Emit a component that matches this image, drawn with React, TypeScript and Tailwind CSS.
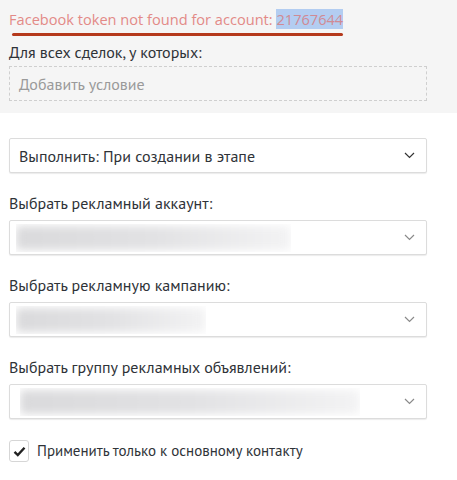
import React from 'react';

function Chevron({ light }: { light?: boolean }) {
  return (
    <svg width="11" height="7" viewBox="0 0 11 7" className="shrink-0">
      <path d="M1 1 L5.5 5.5 L10 1" fill="none" stroke={light ? '#8a8a8a' : '#333'} strokeWidth="1.2" />
    </svg>
  );
}

interface SelectProps {
  text?: string;
  blurWidth?: number;
  blurLeft?: number;
}

function Select({ text, blurWidth = 0, blurLeft = 6 }: SelectProps) {
  return (
    <div className="relative flex h-[35px] w-[418px] items-center justify-between rounded-[2px] border border-[#dcdcdc] bg-white pl-[9px] pr-[11px] shadow-[0_1px_1px_rgba(0,0,0,0.08)]">
      {text ? (
        <span className="text-[16px] text-[#2f3338]">{text}</span>
      ) : (
        <div className="h-[28px] overflow-hidden" style={{ marginLeft: blurLeft - 9 }}>
          <div
            className="h-[24px] mt-[2px] rounded-[4px] bg-gradient-to-r from-[#dadadc] via-[#e2e2e4] to-[#f3f3f4] blur-[4px]"
            style={{ width: blurWidth }}
          />
        </div>
      )}
      <Chevron light={!text} />
    </div>
  );
}

export default function App() {
  return (
    <div className="w-[457px] h-[480px] bg-white font-['PT_Sans','Open_Sans',sans-serif] overflow-hidden">
      <div className="bg-[#f5f5f5] h-[113px] px-[9px] pt-[7px]">
        <div className="inline-block relative font-['Open_Sans',sans-serif] text-[14.6px] text-[#e38a87] leading-[22px]">
          Facebook token not found for account:{' '}
          <span className="bg-[#b3cdf1] text-[#d08a94]">21767644</span>
          <div className="absolute left-[3px] right-0 top-[25px] h-[3px] rounded-full bg-[#b5391c]" />
        </div>
        <div className="mt-[10px] text-[16px] leading-[22px] text-[#2f3338]">Для всех сделок, у которых:</div>
        <div className="mt-[3px] flex h-[35px] w-[418px] items-center border border-dashed border-[#cfcfcf] px-[9px] text-[16px] text-[#9a9a9a]">
          Добавить условие
        </div>
      </div>
      <div className="px-[9px]">
        <div className="mt-[25px]">
          <Select text="Выполнить: При создании в этапе" />
        </div>
        <div className="mt-[19px] text-[16px] leading-[22px] text-[#2f3338]">Выбрать рекламный аккаунт:</div>
        <div className="mt-[6px]">
          <Select blurWidth={275} blurLeft={6} />
        </div>
        <div className="mt-[19px] text-[16px] leading-[22px] text-[#2f3338]">Выбрать рекламную кампанию:</div>
        <div className="mt-[6px]">
          <Select blurWidth={190} blurLeft={6} />
        </div>
        <div className="mt-[19px] text-[16px] leading-[22px] text-[#2f3338]">Выбрать группу рекламных объявлений:</div>
        <div className="mt-[6px]">
          <Select blurWidth={340} blurLeft={10} />
        </div>
        <div className="mt-[21px] flex items-center gap-[8px]">
          <div className="flex h-[22px] w-[20px] items-center justify-center rounded-[3px] border border-[#d6d6d6] bg-white">
            <svg width="13" height="11" viewBox="0 0 13 11">
              <path d="M1.5 5.8 L4.8 9 L11.5 1.8" fill="none" stroke="#222" strokeWidth="2.4" />
            </svg>
          </div>
          <span className="text-[15px] text-[#2f3338]">Применить только к основному контакту</span>
        </div>
      </div>
    </div>
  );
}
